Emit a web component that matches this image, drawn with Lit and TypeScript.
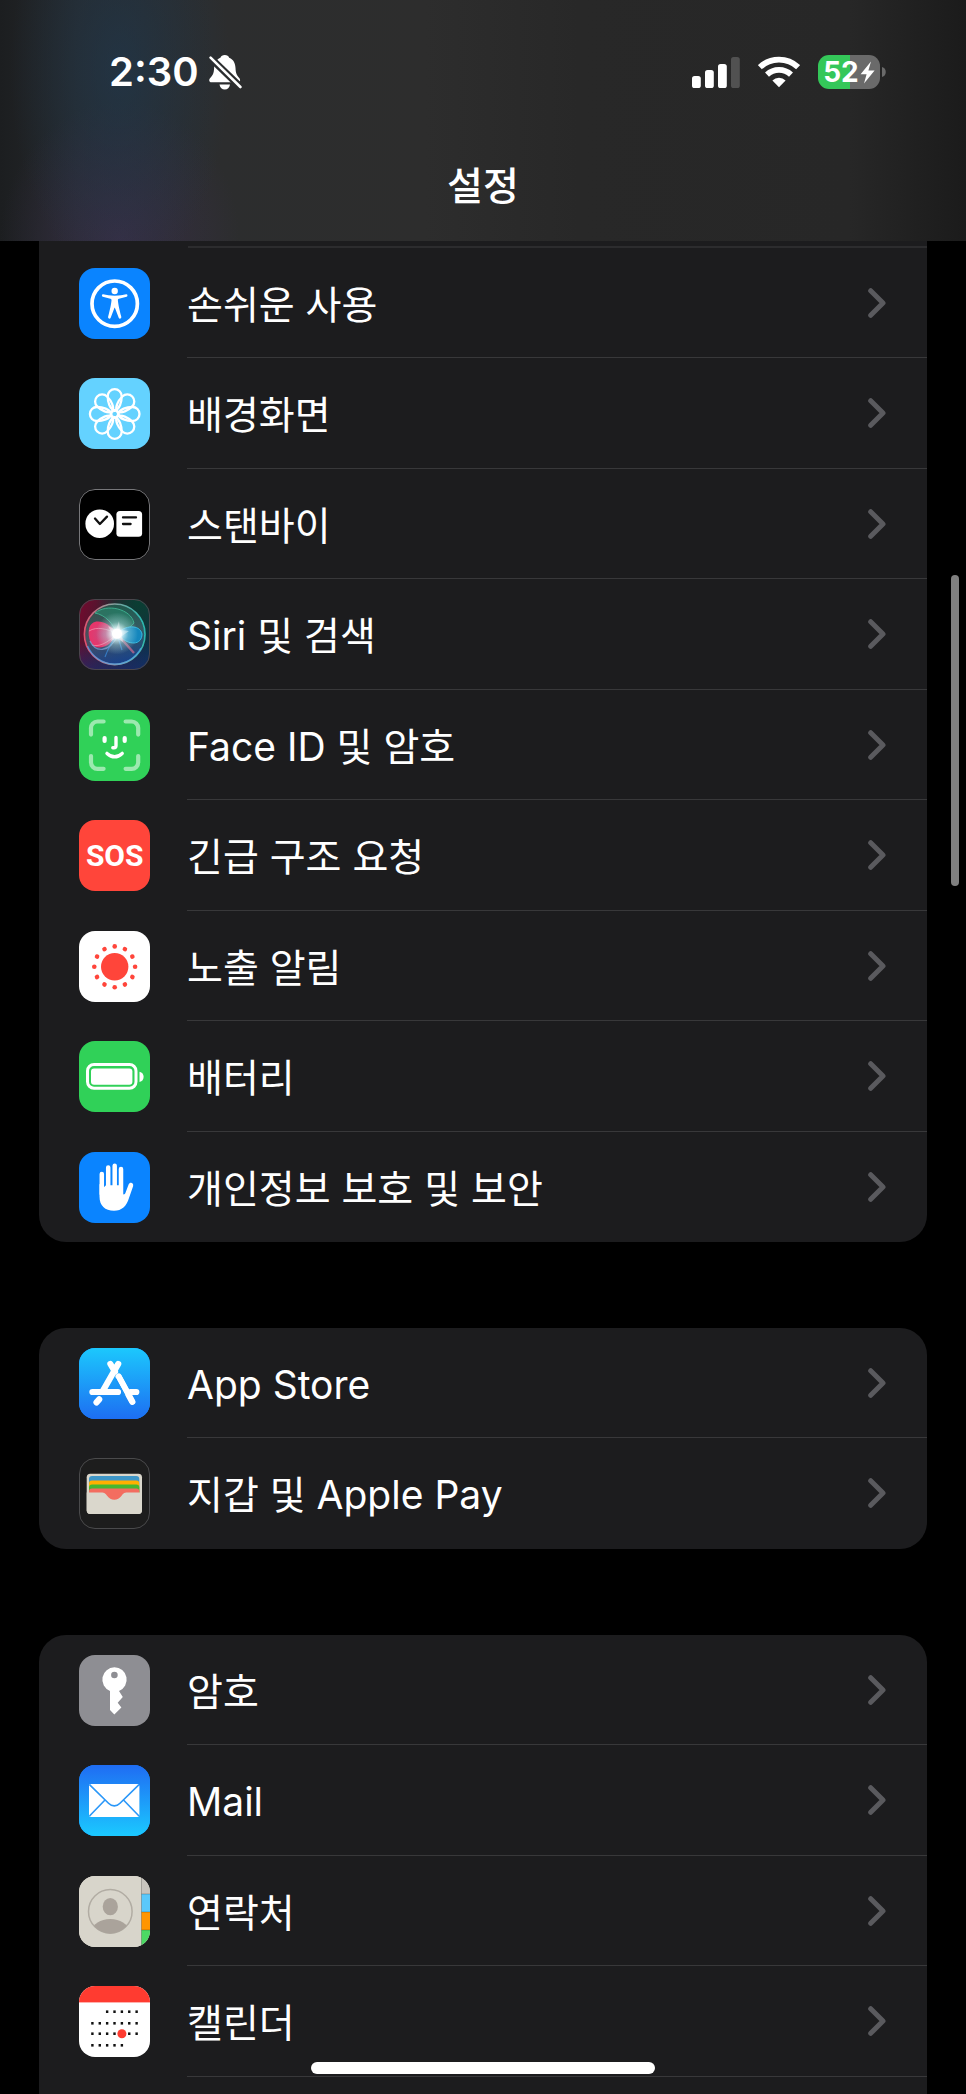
import { LitElement, html, svg, css, type TemplateResult, type SVGTemplateResult } from "lit";
import { customElement, property } from "lit/decorators.js";

type Icon = SVGTemplateResult;

interface Row {
  label: TemplateResult;
  icon: Icon;
  look: string;
}

const petals = [0, 45, 90, 135, 180, 225, 270, 315];
const rays = Array.from({ length: 12 }, (_, i) => i * 30);
const calendarDots = [
  { y: 25.7, from: 2, to: 6 },
  { y: 37.3, from: 0, to: 6 },
  { y: 47.7, from: 0, to: 6 },
  { y: 59.3, from: 0, to: 4 },
].flatMap(({ y, from, to }) =>
  Array.from({ length: to - from + 1 }, (_, i) => ({ x: 13.4 + (from + i) * 7.37, y }))
);

const icons: Record<string, Icon> = {
  accessibility: svg`
    <circle cx="35.7" cy="35.7" r="22.7" fill="none" stroke="#fff" stroke-width="3.7"/>
    <circle cx="35.7" cy="23" r="3.2" fill="#fff"/>
    <path d="M24.2 26.3C27.5 27 31 27.8 35.7 27.8S44 27 47.2 26.3C48.7 26.1 49 28.4 47.6 28.8L40 30.7C39 31 38.8 31.4 38.9 32.6C39.2 36 40.2 41 42.3 48.8C42.7 50.6 40.4 51.4 39.7 49.7L35.9 39.8H35.5L31.7 49.7C31 51.4 28.7 50.6 29.1 48.8C31.2 41 32.2 36 32.5 32.6C32.6 31.4 32.4 31 31.4 30.7L23.8 28.8C22.4 28.4 22.7 26.1 24.2 26.3Z" fill="#fff"/>`,
  wallpaper: svg`
    <g transform="translate(35.7 36)" fill="none" stroke="#fff" stroke-width="2.3">
      ${petals.map((a) => svg`<path transform="rotate(${a})" d="M0 -3.2C-5 -5 -7 -12 -7 -17.8A7 7 0 0 1 7 -17.8C7 -12 5 -5 0 -3.2Z"/>`)}
      <circle r="3.9"/>
    </g>`,
  standby: svg`
    <circle cx="20.7" cy="34.7" r="14.3" fill="#fff"/>
    <path d="M16 29.5L20.9 35L28 27.6" fill="none" stroke="#111" stroke-width="2.3" stroke-linecap="round" stroke-linejoin="round"/>
    <rect x="37.4" y="22" width="25.7" height="25.8" rx="3.6" fill="#fff"/>
    <path d="M44 28.4H57M44 35H51.6" stroke="#111" stroke-width="2.3" stroke-linecap="round"/>`,
  siri: svg`
    <defs>
      <linearGradient id="sbg" x1="0" y1=".3" x2="1" y2=".6">
        <stop offset="0" stop-color="#6d0c2e"/><stop offset=".45" stop-color="#33202f"/><stop offset="1" stop-color="#0c3245"/>
      </linearGradient>
      <linearGradient id="sbg2" x1=".5" y1=".6" x2=".5" y2="1">
        <stop offset="0" stop-color="#1b2a8c" stop-opacity="0"/><stop offset="1" stop-color="#1d2a78" stop-opacity=".6"/>
      </linearGradient>
      <radialGradient id="sgr" cx=".85" cy=".05" r=".6">
        <stop offset="0" stop-color="#093f33"/><stop offset="1" stop-color="#093f33" stop-opacity="0"/>
      </radialGradient>
      <linearGradient id="srim" x1="0" y1=".6" x2="1" y2=".45">
        <stop offset="0" stop-color="#e0506e"/><stop offset=".5" stop-color="#8f9f9c"/><stop offset="1" stop-color="#2bb6ae"/>
      </linearGradient>
      <linearGradient id="sorb" x1=".3" y1="0" x2=".5" y2="1">
        <stop offset="0" stop-color="#1e6a54"/><stop offset=".5" stop-color="#456a74"/><stop offset="1" stop-color="#174c9e"/>
      </linearGradient>
      <radialGradient id="spink"><stop offset="0" stop-color="#c84a80"/><stop offset="1" stop-color="#e8356a"/></radialGradient>
      <radialGradient id="sglow">
        <stop offset="0" stop-color="#fff"/><stop offset=".25" stop-color="#eafcff" stop-opacity=".9"/><stop offset=".55" stop-color="#b8e8ea" stop-opacity=".4"/><stop offset="1" stop-color="#b8e8ea" stop-opacity="0"/>
      </radialGradient>
    </defs>
    <rect width="71" height="71" fill="url(#sbg)"/>
    <rect width="71" height="71" fill="url(#sbg2)"/>
    <rect width="71" height="71" fill="url(#sgr)"/>
    <circle cx="35.7" cy="35.3" r="29.5" fill="url(#sorb)" fill-opacity=".7"/>
    <path d="M16 14C28 4 52 10 55 24C50 30 43 33 38 35C34 24 26 16 16 14Z" fill="#2a9273" fill-opacity=".5" stroke="#43bd99" stroke-width=".8"/>
    <path d="M10 30C12 19 27 20 38 34C31 50 16 53 11 42C10 39 9 34 10 30Z" fill="url(#spink)"/>
    <path d="M10 32C18 27 28 30 38 34.5C28 45 19 48 13 46" fill="none" stroke="#f59bb4" stroke-width="1" opacity=".7"/>
    <path d="M11 42C16 53 30 55 39 36" fill="none" stroke="#7fa7dd" stroke-width="1.3" opacity=".7"/>
    <path d="M38 35C45 26 61 25 63 35C63 46 50 48 38 35Z" fill="#1486bd" stroke="#35b9df" stroke-width="1"/>
    <path d="M26 58C30 47 34 41 38 35L43 51" fill="none" stroke="#3a8de0" stroke-width="1.2" opacity=".7"/>
    <path d="M38 35L55 54" stroke="#cf6b90" stroke-width="2.4" opacity=".7"/>
    <circle cx="38" cy="34.5" r="21" fill="url(#sglow)"/>
    <path d="M29 27L37 31L40 22L41 31L50 32L43 37L44 43L38 39L32 42L34 36Z" fill="#fff" opacity=".4"/>
    <circle cx="38" cy="34.8" r="5" fill="#fff"/>
    <circle cx="35.7" cy="35.3" r="30.3" fill="none" stroke="url(#srim)" stroke-width="1.7"/>
    <path d="M8.5 47A29.5 29.5 0 0 0 62 49" fill="none" stroke="#4aa3f0" stroke-width="1.5" opacity=".7"/>`,
  faceid: svg`
    <path d="M12 24.6V18.5A6.5 6.5 0 0 1 18.5 11.5H24.6M46.6 11.5H52.7A6.5 6.5 0 0 1 59.2 18V24.6M59.2 46V52.3A6.5 6.5 0 0 1 52.7 58.8H46.6M24.6 58.8H18.5A6.5 6.5 0 0 1 12 52.3V46" fill="none" stroke="#fff" stroke-opacity=".52" stroke-width="4.2" stroke-linecap="round"/>
    <path d="M25.6 28V31M45.7 28V31" stroke="#fff" stroke-width="4.2" stroke-linecap="round"/>
    <path d="M37 27.5V35.6Q37 37.8 34.8 37.8H33.8" fill="none" stroke="#fff" stroke-width="3.4" stroke-linecap="round" stroke-linejoin="round"/>
    <path d="M28 43.4Q35.6 50.2 43.2 43.4" fill="none" stroke="#fff" stroke-width="3.4" stroke-linecap="round"/>`,
  sos: svg`<text x="35.7" y="46" class="sos" text-anchor="middle">SOS</text>`,
  exposure: svg`
    <circle cx="35.7" cy="35.8" r="13.7" fill="#ff453a"/>
    ${rays.map((a) => svg`<circle cx="35.7" cy="15.4" r="2.3" fill="#ff453a" transform="rotate(${a} 35.7 35.8)"/>`)}`,
  battery: svg`
    <rect x="8.5" y="23.5" width="48.5" height="23.8" rx="6.5" fill="none" stroke="#fff" stroke-width="3"/>
    <rect x="12" y="27.5" width="41.4" height="16.2" rx="3" fill="#fff"/>
    <path d="M60.5 30.7C66 31.6 66 40 60.5 41Z" fill="#fff"/>`,
  hand: svg`
    <g stroke="#fff" stroke-width="4.5" stroke-linecap="round">
      <path d="M22.8 22V42M29.2 15.4V42M35.7 13.7V42M42 17V42"/>
    </g>
    <path d="M20.5 32L24.9 35.2L27 33.2H40L44.2 42.3C45.3 42.6 46 42 46.5 40.8L49.6 32.6C50.7 29.6 55.1 30.6 54.1 34.2L50 46C47.4 54.3 43 58.7 35 58.7C26 58.7 20.5 53.8 20.5 44.5Z" fill="#fff"/>`,
  appstore: svg`
    <defs><linearGradient id="as" x1="0" y1="0" x2="0" y2="1"><stop offset="0" stop-color="#1cc8fd"/><stop offset="1" stop-color="#1d6ef2"/></linearGradient></defs>
    <rect width="71" height="71" fill="url(#as)"/>
    <g stroke="#fff" stroke-width="6.2" stroke-linecap="round" fill="none">
      <path d="M31.4 16L36 23.6M39.2 16L23.8 43M13.4 44H39M51.5 44H57.3M20.2 51.4L17.5 54.4"/>
      <path d="M39.6 28.6L53.3 53.8"/>
    </g>
    <path d="M36.6 30.6L46 47.5" stroke="#1d96f8" stroke-width="1.6"/>
    <path d="M39.8 28.6L53.3 53.8" stroke="#fff" stroke-width="5.6" stroke-linecap="round"/>`,
  wallet: svg`
    <rect x="7.7" y="15.7" width="55.3" height="40.2" rx="3.6" fill="#dad7cc"/>
    <rect x="10" y="18" width="50.3" height="20" rx="3" fill="#3f97c8"/>
    <rect x="10" y="22.4" width="50.3" height="16" rx="3" fill="#ffb000"/>
    <rect x="10" y="26.4" width="50.3" height="12" rx="3" fill="#46b730"/>
    <rect x="10" y="30.4" width="50.3" height="12" rx="3" fill="#f36d60"/>
    <path d="M7.7 34.4H22C26 34.4 26.6 35.8 28.3 38C30 40.4 32.4 41.7 35.3 41.7S40.6 40.4 42.4 38C44 35.8 44.6 34.4 48.6 34.4H63V52.3A3.6 3.6 0 0 1 59.4 55.9H11.3A3.6 3.6 0 0 1 7.7 52.3Z" fill="#dad7cc"/>`,
  key: svg`
    <path fill-rule="evenodd" d="M35.4 12.3A12.3 12.3 0 0 1 40 36L43.8 41.9L38.7 47.8L42.4 52.5L35.3 59.6L31 55V36A12.3 12.3 0 0 1 35.4 12.3ZM35.4 16.7A3.3 3.3 0 1 0 35.4 23.3A3.3 3.3 0 1 0 35.4 16.7Z" fill="#fff"/>`,
  mail: svg`
    <defs><linearGradient id="ml" x1="0" y1="0" x2="0" y2="1"><stop offset="0" stop-color="#1f6cf3"/><stop offset="1" stop-color="#1bc9ff"/></linearGradient></defs>
    <rect width="71" height="71" fill="url(#ml)"/>
    <rect x="10" y="19" width="50.4" height="33" rx="2" fill="#fff"/>
    <path d="M10.5 19.6L29.5 38.2C33 41.8 37.6 41.8 41 38.2L60 19.6M26 35L10.5 51M44.5 35L60 51" fill="none" stroke="#2a97f8" stroke-width="1.6"/>`,
  contacts: svg`
    <defs>
      <clipPath id="ring"><circle cx="31.3" cy="35.4" r="22"/></clipPath>
    </defs>
    <rect width="63" height="71" fill="#d8d5cb"/>
    <rect x="62.5" width="9" height="18" fill="#c8c4bd"/>
    <rect x="62.5" y="18" width="9" height="18" fill="#5ac8fa"/>
    <rect x="62.5" y="36" width="9" height="18" fill="#ff9500"/>
    <rect x="62.5" y="54" width="9" height="17" fill="#4cd964"/>
    <path d="M62.5 18H71M62.5 36H71M62.5 54H71M62.5 0V71" stroke="#000" stroke-opacity=".22" stroke-width="1"/>
    <circle cx="31.3" cy="35.4" r="21.8" fill="none" stroke="#b1aca3" stroke-width="1.5"/>
    <ellipse cx="31.3" cy="30.7" rx="7.6" ry="8.6" fill="#aaa39b"/>
    <ellipse cx="31.3" cy="55" rx="18" ry="12" fill="#aaa39b" clip-path="url(#ring)"/>`,
  calendar: svg`
    <rect width="71" height="16.4" fill="#ff3b30"/>
    ${calendarDots.map(({ x, y }) => svg`<rect x=${x - 1.2} y=${y - 1.3} width="2.4" height="2.6" fill="#111"/>`)}
    <circle cx="42.9" cy="47.7" r="4.5" fill="#ff3b30"/>`,
};

const groups: Row[][] = [
  [
    { label: html`손쉬운 사용`, icon: icons.accessibility, look: "blue" },
    { label: html`배경화면`, icon: icons.wallpaper, look: "sky" },
    { label: html`스탠바이`, icon: icons.standby, look: "black" },
    { label: html`Siri 및 검색`, icon: icons.siri, look: "siri" },
    { label: html`Face ID 및 암호`, icon: icons.faceid, look: "green" },
    { label: html`긴급 구조 요청`, icon: icons.sos, look: "red" },
    { label: html`노출 알림`, icon: icons.exposure, look: "white" },
    { label: html`배터리`, icon: icons.battery, look: "green" },
    { label: html`개인정보 보호 및 보안`, icon: icons.hand, look: "blue" },
  ],
  [
    { label: html`App Store`, icon: icons.appstore, look: "blue" },
    { label: html`지갑 및 Apple Pay`, icon: icons.wallet, look: "dark" },
  ],
  [
    { label: html`암호`, icon: icons.key, look: "gray" },
    { label: html`Mail`, icon: icons.mail, look: "blue" },
    { label: html`연락처`, icon: icons.contacts, look: "stone" },
    { label: html`캘린더`, icon: icons.calendar, look: "white" },
  ],
];

@customElement("status-bar")
class StatusBar extends LitElement {
  static styles = css`
    :host {
      display: flex;
      align-items: center;
      justify-content: space-between;
      height: 34px;
      padding: 55px 80px 0 109px;
      color: #fff;
      font-family: Inter, "Noto Sans CJK KR", sans-serif;
    }
    .side { display: flex; align-items: center; }
    .left { gap: 10px; }
    .right { gap: 18px; }
    .time { font-size: 40px; line-height: 34px; font-weight: 600; }
    svg { display: block; }
    .power { display: flex; align-items: center; gap: 2px; }
    .cell {
      display: flex;
      align-items: center;
      justify-content: center;
      gap: 1px;
      width: 62px;
      height: 34px;
      border-radius: 11px;
      background: linear-gradient(90deg, #34c759 52%, #6a6a6a 52%);
      font-size: 28px;
      line-height: 34px;
      font-weight: 700;
    }
  `;

  render() {
    return html`
      <div class="side left">
        <span class="time">2:30</span>
        <svg width="33" height="36" viewBox="0 0 33 36" aria-label="무음">
          <defs>
            <mask id="cut">
              <rect width="33" height="36" fill="#fff"/>
              <path d="M0 2.5L33 34.5" stroke="#000" stroke-width="7"/>
            </mask>
          </defs>
          <g mask="url(#cut)" fill="#fff">
            <path d="M15.8 1C18 1 19.6 2 20.2 3.8C24.6 5.6 26.3 9.4 26.5 14C26.7 19.4 27.8 21.4 30.2 24C31.8 25.8 31.3 28.3 28.8 28.3H2.6C0 28.3-.5 25.8 1.2 24C3.8 21.4 4.9 19.4 5.1 14C5.3 9.4 7 5.6 11.4 3.8C12 2 13.6 1 15.8 1Z"/>
          </g>
          <path d="M10.5 30.6H21C20.4 33.8 18.6 35.6 15.8 35.6S11.1 33.8 10.5 30.6Z" fill="#fff"/>
          <path d="M1.6 3.6L31.4 33" stroke="#fff" stroke-width="2.6" stroke-linecap="round"/>
        </svg>
      </div>
      <div class="side right">
        <svg width="48" height="31" viewBox="0 0 48 31" aria-label="신호 세기">
          <g fill="#fff">
            <rect y="19" width="8.8" height="12" rx="2.6"/>
            <rect x="13" y="13" width="8.8" height="18" rx="2.6"/>
            <rect x="26" y="7" width="8.8" height="24" rx="2.6"/>
          </g>
          <rect x="39" width="8.8" height="31" rx="2.6" fill="#515151"/>
        </svg>
        <svg width="42" height="32" viewBox="0 0 42 32" aria-label="Wi-Fi">
          <g fill="none" stroke="#fff" stroke-width="5.8">
            <path d="M1.9 11.2A28 28 0 0 1 40.1 11.2"/>
            <path d="M9 18.7A17.6 17.6 0 0 1 33 18.7"/>
          </g>
          <path d="M21 31.2L14.4 24.5A9.6 9.6 0 0 1 27.6 24.5Z" fill="#fff"/>
        </svg>
        <div class="power">
          <div class="cell">
            <span>52</span>
            <svg width="15" height="23" viewBox="0 0 15 23" aria-hidden="true"><path d="M11 .6L.6 13.2H6.6L4 22.4L14.6 9.4H8.4Z" fill="#fff"/></svg>
          </div>
          <svg width="4" height="10" viewBox="0 0 4 10" aria-hidden="true"><path d="M0 0C5 1 5 9 0 10Z" fill="#6a6a6a"/></svg>
        </div>
      </div>
    `;
  }
}

@customElement("settings-row")
class SettingsRow extends LitElement {
  @property({ attribute: false }) row!: Row;
  @property({ type: Boolean }) last = false;

  static styles = css`
    :host { display: block; height: 100%; }
    .row {
      display: flex;
      align-items: center;
      gap: 37px;
      height: 100%;
      padding-left: 40px;
      color: #fff;
      text-decoration: none;
    }
    .icon {
      flex: none;
      width: 71px;
      height: 71px;
      border-radius: 16px;
      overflow: hidden;
    }
    .icon svg { display: block; width: 71px; height: 71px; }
    .blue { background: #0a84ff; }
    .sky { background: #64d2ff; }
    .black { background: #000; outline: 1px solid #77777a; outline-offset: -1px; }
    .siri { outline: 1px solid #4a464c; outline-offset: -1px; }
    .green { background: #30d158; }
    .red { background: #ff453a; }
    .white { background: #fff; }
    .dark { background: #1d1d1d; outline: 1px solid #4a4a4c; outline-offset: -1px; }
    .gray { background: #8e8e93; }
    .stone { background: #d8d5cb; }
    .body {
      flex: 1;
      align-self: stretch;
      display: flex;
      align-items: center;
      justify-content: space-between;
      padding-right: 41px;
      border-bottom: 1px solid #38383a;
    }
    .last { border-bottom-color: transparent; }
    .label {
      padding-top: 4px;
      font-family: Inter, "Noto Sans CJK KR", sans-serif;
      font-size: 39px;
      line-height: 56px;
    }
    .sos { font: 700 30px Roboto, sans-serif; fill: #fff; }
    .chevron { flex: none; display: block; }
  `;

  render() {
    return html`
      <a class="row" href="#">
        <span class="icon ${this.row.look}">
          <svg viewBox="0 0 71 71" aria-hidden="true">${this.row.icon}</svg>
        </span>
        <span class="body ${this.last ? "last" : ""}">
          <span class="label">${this.row.label}</span>
          <svg class="chevron" width="18" height="30" viewBox="0 0 18 30" aria-hidden="true">
            <path d="M2.7 2.7L15 15L2.7 27.3" fill="none" stroke="#5a5a5e" stroke-width="5" stroke-linecap="round" stroke-linejoin="round"/>
          </svg>
        </span>
      </a>
    `;
  }
}

@customElement("app-root")
class AppRoot extends LitElement {
  static styles = css`
    :host {
      display: flex;
      flex-direction: column;
      min-height: 100vh;
      background: #000;
      font-family: Inter, "Noto Sans CJK KR", sans-serif;
    }
    .header {
      box-sizing: border-box;
      height: 241px;
      background:
        radial-gradient(ellipse 110px 210px at 120px 70px, rgba(31, 58, 82, 0.6), rgba(31, 58, 82, 0)),
        radial-gradient(ellipse 120px 140px at 120px 241px, rgba(60, 48, 78, 0.7), rgba(60, 48, 78, 0)),
        linear-gradient(90deg, #1c1e20 0, #26292c 8%, #2c2d2e 22%, #2d2d2d 44%, #282828 60%, #272727 88%, #1b1b1b 100%);
    }
    .title {
      margin: 69px 0 0;
      color: #fff;
      text-align: center;
      font-size: 39px;
      line-height: 56px;
      font-weight: 500;
    }
    .main {
      flex: 1;
      display: flex;
      flex-direction: column;
      gap: 86px;
      padding: 0 39px;
    }
    .group {
      margin: 0;
      padding: 0;
      list-style: none;
      border-radius: 27px;
      background: #1c1c1e;
    }
    .group:first-child {
      border-radius: 0 0 27px 27px;
    }
    .group:first-child::before {
      content: "";
      display: block;
      height: 2px;
      margin-left: 149px;
      padding-top: 5px;
      background: #2c2c2e content-box;
    }
    .group:last-child {
      flex: 1;
      padding-bottom: 16px;
      border-radius: 27px 27px 0 0;
    }
    .item { height: 110px; }
    .item:nth-child(even) { height: 111px; }
    .scroll {
      position: fixed;
      top: 575px;
      right: 7px;
      width: 8px;
      height: 311px;
      border-radius: 4px;
      background: #808080;
    }
    .home {
      position: fixed;
      bottom: 20px;
      left: 50%;
      width: 344px;
      height: 12px;
      margin-left: -172px;
      border-radius: 6px;
      background: #fff;
    }
  `;

  render() {
    return html`
      <header class="header">
        <status-bar></status-bar>
        <h1 class="title">설정</h1>
      </header>
      <main class="main">
        ${groups.map(
          (rows, g) => html`
            <ul class="group">
              ${rows.map(
                (row, i) => html`
                  <li class="item">
                    <settings-row .row=${row} ?last=${g < 2 && i === rows.length - 1}></settings-row>
                  </li>
                `
              )}
            </ul>
          `
        )}
      </main>
      <div class="scroll"></div>
      <div class="home"></div>
    `;
  }
}
